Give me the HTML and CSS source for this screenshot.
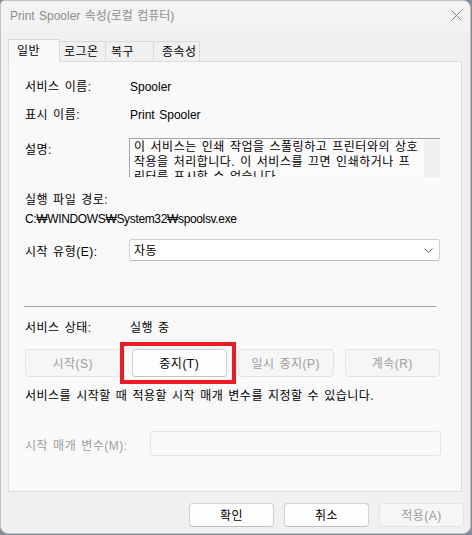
FILE: index.html
```html
<!DOCTYPE html>
<html lang="ko">
<head>
<meta charset="utf-8">
<link rel="stylesheet" href="styles.css">
</head>
<body>
<div class="window">
  <div class="titlebar">
    <span class="title">Print Spooler 속성(로컬 컴퓨터)</span>
    <svg class="close" width="11" height="11" viewBox="0 0 11 11"><path d="M0.5 0.5L10.5 10.5M10.5 0.5L0.5 10.5" stroke="#7f7f7f" stroke-width="1" fill="none"/></svg>
  </div>
  <div class="tabs">
    <div class="tab tab-active">일반</div>
    <div class="tab tab-2">로그온</div>
    <div class="tab tab-3">복구</div>
    <div class="tab tab-4">종속성</div>
  </div>
  <div class="panel">
    <div class="row row-20"><span class="label">서비스 이름:</span><span class="latin">Spooler</span></div>
    <div class="row row-20 mt8"><span class="label">표시 이름:</span><span class="latin">Print Spooler</span></div>
    <div class="row row-desc">
      <span class="label label-desc">설명:</span>
      <div class="textbox">
        <div class="textbox-text">
          <div class="tline">이 서비스는 인쇄 작업을 스풀링하고 프린터와의 상호</div>
          <div class="tline">작용을 처리합니다. 이 서비스를 끄면 인쇄하거나 프</div>
          <div class="tline">린터를 표시할 수 없습니다.</div>
        </div>
        <div class="textbox-scroll"></div>
      </div>
    </div>
    <div class="line19 mt13">실행 파일 경로:</div>
    <div class="line19 path">C:₩WINDOWS₩System32₩spoolsv.exe</div>
    <div class="row row-combo">
      <span class="label">시작 유형(E):</span>
      <div class="combo">
        <span>자동</span>
        <svg class="chev" width="9" height="5" viewBox="0 0 9 5"><path d="M0.5 0.5L4.5 4.5L8.5 0.5" stroke="#606060" stroke-width="1" fill="none"/></svg>
      </div>
    </div>
    <div class="sep"></div>
    <div class="row row-20 mt10"><span class="label">서비스 상태:</span><span>실행 중</span></div>
    <div class="btn-row">
      <div class="btn btn-disabled">시작(S)</div>
      <div class="btn">중지(T)</div>
      <div class="btn btn-disabled">일시 중지(P)</div>
      <div class="btn btn-disabled">계속(R)</div>
      <div class="highlight"></div>
    </div>
    <div class="row row-20 mt8">서비스를 시작할 때 적용할 시작 매개 변수를 지정할 수 있습니다.</div>
    <div class="row row-param">
      <span class="label label-wide disabled-text">시작 매개 변수(M):</span>
      <div class="param-input"></div>
    </div>
  </div>
  <div class="footer">
    <div class="btn fbtn">확인</div>
    <div class="btn fbtn">취소</div>
    <div class="btn fbtn btn-disabled">적용(A)</div>
  </div>
</div>
</body>
</html>
```
FILE: styles.css
```css
* { box-sizing: border-box; }
html, body { margin: 0; padding: 0; }
body {
  width: 472px;
  height: 535px;
  overflow: hidden;
  background: #7f8d9b;
  font-family: "Liberation Sans", "Noto Sans CJK KR", sans-serif;
  font-size: 12px;
  letter-spacing: 0.5px;
  word-spacing: 1.2px;
  color: #000;
}
.latin { letter-spacing: 0; word-spacing: 1.2px; }
.path { letter-spacing: -0.35px; }
.window {
  width: 471px;
  height: 534px;
  background: #f0f0f0;
  border: 1px solid #c2c2c2;
  border-radius: 5px 8px 8px 8px;
  overflow: hidden;
  display: flex;
  flex-direction: column;
}
.titlebar {
  height: 30px;
  flex: none;
  background: #f3f3f3;
  display: flex;
  align-items: flex-start;
  padding-left: 9px;
}
.title {
  color: #8c8c8c;
  line-height: 16px;
  margin-top: 7px;
  letter-spacing: 0;
  word-spacing: 1px;
}
.close {
  margin-left: auto;
  margin-right: 8px;
  margin-top: 9px;
}
.tabs {
  height: 30px;
  flex: none;
  display: flex;
  align-items: flex-end;
  padding: 8px 0 0 7px;
  position: relative;
  z-index: 1;
}
.tab {
  height: 20px;
  line-height: 21px;
  border: 1px solid #d9d9d9;
  border-bottom: none;
  background: #f0f0f0;
  margin-left: -1px;
  white-space: nowrap;
}
.tab-active {
  height: 23px;
  width: 52px;
  margin-left: 0;
  margin-bottom: -1px;
  background: #f9f9f9;
  padding-left: 8px;
  line-height: 22px;
  position: relative;
  z-index: 2;
}
.tab-2 { width: 47px; padding-left: 4px; }
.tab-3 { width: 49px; padding-left: 5px; }
.tab-4 { width: 47px; padding-left: 8px; }
.panel {
  height: 431px;
  flex: none;
  margin: 0 8px 0 7px;
  background: #f9f9f9;
  border: 1px solid #dcdcdc;
  padding: 14px 0 0 16px;
  display: flex;
  flex-direction: column;
  align-items: flex-start;
}
.row {
  display: flex;
  align-items: center;
  white-space: nowrap;
}
.row-20 { height: 20px; line-height: 20px; padding-top: 1px; }
.mt8 { margin-top: 8px; }
.mt10 { margin-top: 10px; }
.mt13 { margin-top: 13px; }
.label { width: 105px; flex: none; }
.label-wide { width: 125px; }
.disabled-text { color: #9d9d9d; }
.row-desc {
  margin-top: 14px;
  align-items: flex-start;
  height: 39px;
}
.label-desc { line-height: 20px; padding-top: 2px; }
.textbox {
  width: 311px;
  height: 39px;
  margin-left: -1px;
  border-top: 1px solid #a2a2a2;
  border-left: 1px solid #a2a2a2;
  background: #fbfbfb;
  display: flex;
  overflow: hidden;
}
.textbox-text {
  flex: 1;
  min-width: 0;
  overflow: hidden;
  padding-left: 4px;
  padding-top: 1px;
  line-height: 15px;
}
.tline { white-space: nowrap; }
.textbox-scroll {
  width: 16px;
  flex: none;
  background: #f0f0f0;
}
.line19 {
  height: 19px;
  line-height: 19px;
  padding-top: 1px;
  white-space: nowrap;
}
.row-combo {
  margin-top: 11px;
  height: 22px;
  padding-top: 1px;
}
.combo {
  width: 311px;
  height: 22px;
  margin-left: -1px;
  margin-top: -1px;
  background: #fff;
  border: 1px solid #d0d0d0;
  border-bottom-color: #bcbcbc;
  border-radius: 3px;
  display: flex;
  align-items: center;
  padding: 1px 4px 0 4px;
  line-height: 20px;
}
.chev { margin-left: auto; margin-right: 2px; margin-top: -1px; }
.sep {
  margin-top: 45px;
  margin-left: -1px;
  width: 412px;
  height: 1px;
  background: #a0a0a0;
}
.btn-row {
  margin-top: 12px;
  width: 415px;
  height: 28px;
  display: grid;
  grid-template-columns: repeat(4, 1fr);
  column-gap: 11px;
  position: relative;
}
.btn {
  background: #fdfdfd;
  border: 1px solid #d0d0d0;
  border-bottom-color: #bfbfbf;
  border-radius: 4px;
  display: flex;
  align-items: center;
  justify-content: center;
  white-space: nowrap;
  line-height: 16px;
  padding-top: 1px;
}
.btn-disabled {
  background: #f6f6f6;
  border-color: #e3e3e3;
  color: #9d9d9d;
}
.highlight {
  position: absolute;
  left: 95px;
  top: -7px;
  width: 116px;
  height: 42px;
  border: 4px solid #ed1c24;
}
.row-param {
  margin-top: 26px;
  height: 25px;
  padding-top: 1px;
}
.param-input {
  width: 291px;
  height: 25px;
  margin-top: -1px;
  background: #f9f9f9;
  border: 1px solid #e5e5e5;
  border-radius: 3px;
}
.footer {
  margin-top: 11px;
  display: flex;
  justify-content: flex-end;
  gap: 10px;
  padding-right: 6px;
}
.fbtn {
  width: 85px;
  height: 24px;
}
```
